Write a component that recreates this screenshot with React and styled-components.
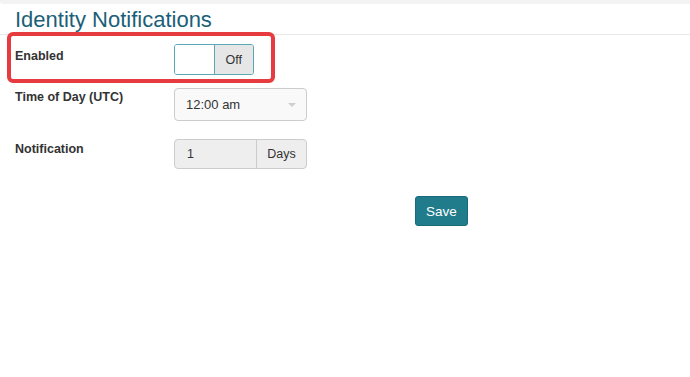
import React from "react";
import styled, { createGlobalStyle } from "styled-components";

const Global = createGlobalStyle`
  html, body { margin: 0; padding: 0; background: #fff; }
  body { font-family: "Liberation Sans", Arial, sans-serif; color: #333; }
`;

const Page = styled.div`
  width: 690px;
  height: 377px;
  background: #fff;
`;

const TopStrip = styled.div`
  height: 4px;
  background: #f3f3f3;
  border-bottom-left-radius: 3px;
`;

const Header = styled.div`
  padding: 1px 0 0 15px;
  border-bottom: 1px solid #e8e8e8;
`;

const Title = styled.h1`
  margin: 0;
  font-size: 22px;
  line-height: 29px;
  font-weight: 400;
  color: #1b5f78;
`;

const Form = styled.div`
  display: flex;
  flex-direction: column;
  padding-top: 9px;
`;

const Row = styled.div`
  position: relative;
  display: grid;
  grid-template-columns: 159px 133px;
  align-items: start;
  padding-left: 15px;
  margin-bottom: ${(p) => p.$mb || 0}px;
`;

const Label = styled.div`
  font-size: 12.5px;
  line-height: 15px;
  font-weight: 700;
  color: #333;
  padding-top: ${(p) => p.$pt || 0}px;
`;

const Highlight = styled.div`
  position: absolute;
  left: 7px;
  top: -12px;
  width: 268px;
  height: 51px;
  box-sizing: border-box;
  border: 4px solid #e63b3f;
  border-radius: 6px;
  pointer-events: none;
`;

const Toggle = styled.div`
  display: flex;
  width: 80px;
  height: 31px;
  box-sizing: border-box;
  border: 1px solid #5aa8b6;
  border-radius: 3px;
  overflow: hidden;
`;

const ToggleHalf = styled.div`
  width: 40px;
  display: flex;
  align-items: center;
  justify-content: center;
  font-size: 12.5px;
  color: #333;
  background: ${(p) => (p.$off ? "#e6e6e6" : "#fff")};
  border-left: ${(p) => (p.$off ? "1px solid #5aa8b6" : "none")};
`;

const Select = styled.div`
  display: flex;
  align-items: center;
  justify-content: space-between;
  width: 133px;
  height: 33px;
  box-sizing: border-box;
  padding: 0 10px 0 11px;
  border: 1px solid #ccc;
  border-radius: 4px;
  background: #f9f9f9;
  font-size: 13px;
  color: #333;
`;

const Caret = styled.span`
  width: 0;
  height: 0;
  border-left: 4px solid transparent;
  border-right: 4px solid transparent;
  border-top: 4px solid #cfcfcf;
`;

const InputGroup = styled.div`
  display: flex;
  width: 133px;
  height: 30px;
  box-sizing: border-box;
  border: 1px solid #ccc;
  border-radius: 4px;
  background: #eee;
  font-size: 12.5px;
  color: #333;
`;

const InputPart = styled.div`
  width: 81px;
  display: flex;
  align-items: center;
  padding-left: 12px;
  box-sizing: border-box;
`;

const Addon = styled.div`
  flex: 1;
  display: flex;
  align-items: center;
  justify-content: center;
  border-left: 1px solid #ccc;
`;

const Actions = styled.div`
  display: flex;
  padding-left: 415px;
`;

const SaveButton = styled.button`
  width: 53px;
  height: 30px;
  box-sizing: border-box;
  border: 1px solid #1a6a79;
  border-radius: 3px;
  background: #207b8b;
  color: #fff;
  font-family: "Liberation Sans", Arial, sans-serif;
  font-size: 13.5px;
  padding: 0;
`;

export default function App() {
  return (
    <Page>
      <Global />
      <TopStrip />
      <Header>
        <Title>Identity Notifications</Title>
      </Header>
      <Form>
        <Row $mb={13}>
          <Label $pt={5}>Enabled</Label>
          <Toggle>
            <ToggleHalf />
            <ToggleHalf $off>Off</ToggleHalf>
          </Toggle>
          <Highlight />
        </Row>
        <Row $mb={18}>
          <Label $pt={2}>Time of Day (UTC)</Label>
          <Select>
            <span>12:00 am</span>
            <Caret />
          </Select>
        </Row>
        <Row $mb={27}>
          <Label $pt={3}>Notification</Label>
          <InputGroup>
            <InputPart>1</InputPart>
            <Addon>Days</Addon>
          </InputGroup>
        </Row>
        <Actions>
          <SaveButton>Save</SaveButton>
        </Actions>
      </Form>
    </Page>
  );
}
